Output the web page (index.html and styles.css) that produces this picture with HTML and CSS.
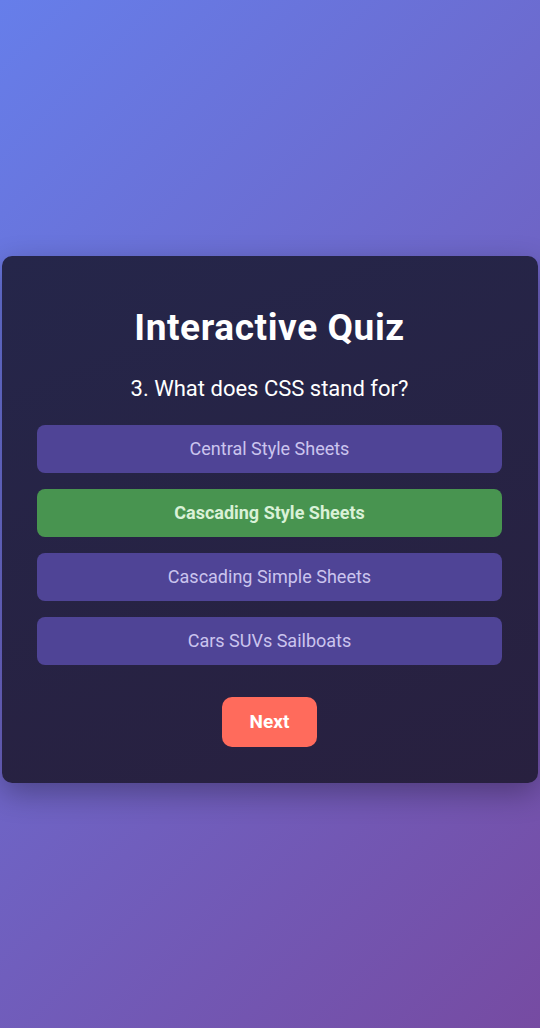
FILE: index.html
```html
<!DOCTYPE html>
<html lang="en">
<head>
<meta charset="utf-8">
<title>Interactive Quiz</title>
<link rel="stylesheet" href="styles.css">
</head>
<body>
<main class="page">
  <section class="card">
    <h1 class="title">Interactive Quiz</h1>
    <p class="question">3. What does CSS stand for?</p>
    <div class="options">
      <button class="option">Central Style Sheets</button>
      <button class="option correct">Cascading Style Sheets</button>
      <button class="option">Cascading Simple Sheets</button>
      <button class="option">Cars SUVs Sailboats</button>
    </div>
    <button class="next">Next</button>
  </section>
</main>
</body>
</html>
```
FILE: styles.css
```css
html, body {
  margin: 0;
  padding: 0;
  height: 100%;
}
body {
  background: linear-gradient(135deg, #667eea 0%, #764ba2 100%);
  font-family: Roboto, "Liberation Sans", sans-serif;
}
.page {
  min-height: 100%;
  box-sizing: border-box;
  display: flex;
  align-items: center;
  justify-content: center;
  padding: 10px 2px 0;
}
.card {
  width: 100%;
  box-sizing: border-box;
  background: linear-gradient(160deg, #25264a 0%, #28203f 100%);
  border-radius: 10px;
  box-shadow: 0 10px 30px rgba(0, 0, 0, 0.3);
  padding: 52px 36px 36px 35px;
  display: flex;
  flex-direction: column;
  align-items: center;
}
.title {
  margin: 0;
  font-size: 37px;
  line-height: 40px;
  font-weight: 700;
  color: #ffffff;
  letter-spacing: 0.6px;
}
.question {
  margin: 29px 0 24px;
  font-size: 22px;
  line-height: 24px;
  color: #ffffff;
}
.options {
  align-self: stretch;
  display: flex;
  flex-direction: column;
  gap: 16px;
}
.option {
  height: 48px;
  border: none;
  border-radius: 8px;
  background: #4f4496;
  color: #cbc4ee;
  font-family: Roboto, "Liberation Sans", sans-serif;
  font-size: 18px;
}
.option.correct {
  background: #489450;
  color: #d9f1d7;
  font-weight: 700;
}
.next {
  margin-top: 32px;
  width: 95px;
  height: 50px;
  border: none;
  border-radius: 10px;
  background: #ff6b5c;
  color: #ffffff;
  font-family: Roboto, "Liberation Sans", sans-serif;
  font-size: 19px;
  font-weight: 700;
}
```
